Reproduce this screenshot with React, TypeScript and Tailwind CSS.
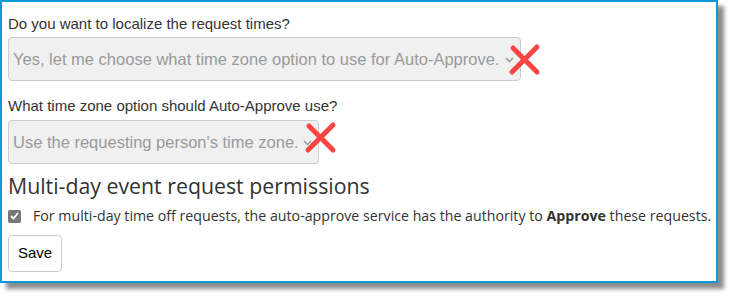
import React from "react";

function RedX({ className }: { className: string }) {
    return (
        <svg className={className} width="34" height="34" viewBox="0 0 34 34">
            <path d="M5 5 L29 29 M29 4 L4 29" stroke="#fb4444" strokeWidth="5" strokeLinecap="round" fill="none" />
        </svg>
    );
}

function FakeSelect({ text, width, mark }: { text: string; width: string; mark: string }) {
    return (
        <div className={`relative flex h-[44px] items-center rounded-[4px] border border-[#cccccc] bg-[#f0f0f0] pl-[4px] ${width}`}>
            <span className="text-[16.5px] text-[#9a9a9a] whitespace-nowrap" style={{ fontFamily: '"Liberation Sans", Arial, sans-serif' }}>
                {text}
            </span>
            <svg className="absolute right-[6px] top-[19px]" width="9" height="6" viewBox="0 0 9 6">
                <path d="M1 1 L4.5 4.5 L8 1" stroke="#999" strokeWidth="1.5" fill="none" />
            </svg>
            <RedX className={`absolute ${mark}`} />
        </div>
    );
}

export default function App() {
    return (
        <div className="w-[732px] h-[297px] bg-white">
            <div className="w-[718px] h-[283px] border-2 border-[#0c98d6] bg-white px-[6px] pt-[12px] shadow-[6px_6px_4px_rgba(0,0,0,0.45)]">
                <div className="text-[15px] leading-[20px] text-[#333]" style={{ fontFamily: '"Liberation Sans", Arial, sans-serif' }}>
                    Do you want to localize the request times?
                </div>
                <div className="mt-[3px]">
                    <FakeSelect
                        text="Yes, let me choose what time zone option to use for Auto-Approve."
                        width="w-[513px]"
                        mark="left-[499px] top-[5px]"
                    />
                </div>
                <div className="mt-[15px] text-[15px] leading-[20px] text-[#333]" style={{ fontFamily: '"Liberation Sans", Arial, sans-serif' }}>
                    What time zone option should Auto-Approve use?
                </div>
                <div className="mt-[4px]">
                    <FakeSelect text="Use the requesting person's time zone." width="w-[311px]" mark="left-[295px] top-[0px]" />
                </div>
                <h2 className="mt-[9px] text-[21.3px] leading-[26px] text-[#333]" style={{ fontFamily: '"Open Sans", "Noto Sans", sans-serif' }}>
                    Multi-day event request permissions
                </h2>
                <div className="mt-[7px] flex items-center text-[14.2px] leading-[20px] text-[#333]" style={{ fontFamily: '"Open Sans", "Noto Sans", sans-serif' }}>
                    <span className="flex h-[13px] w-[13px] shrink-0 items-center justify-center rounded-[2px] bg-[#777]">
                        <svg width="9" height="8" viewBox="0 0 9 8">
                            <path d="M1 4 L3.5 6.5 L8 1" stroke="white" strokeWidth="1.8" fill="none" />
                        </svg>
                    </span>
                    <span className="ml-[12px] whitespace-nowrap">
                        For multi-day time off requests, the auto-approve service has the authority to <b>Approve</b> these requests.
                    </span>
                </div>
                <button
                    className="mt-[9px] h-[37px] w-[54px] rounded-[4px] border border-[#cccccc] bg-white text-[15px] text-black"
                    style={{ fontFamily: '"Liberation Sans", Arial, sans-serif' }}
                >
                    Save
                </button>
            </div>
        </div>
    );
}
